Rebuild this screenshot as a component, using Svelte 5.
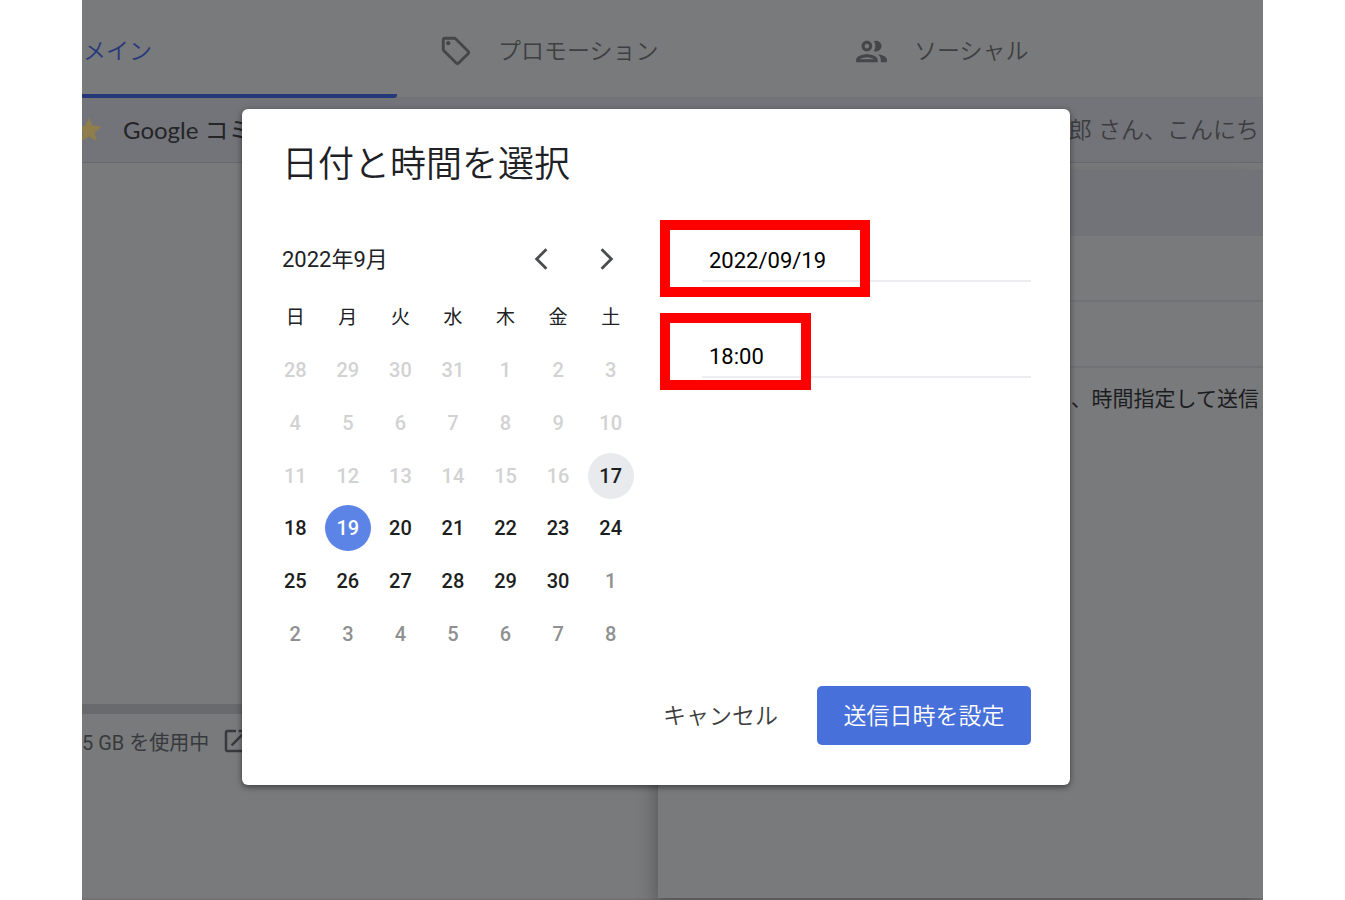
<script lang="ts">
  type Day = { n: number; kind: 'past' | 'open' | 'next' | 'today' | 'selected' };

  const weekdays = ['日', '月', '火', '水', '木', '金', '土'];
  const numbers = [
    28, 29, 30, 31, 1, 2, 3,
    4, 5, 6, 7, 8, 9, 10,
    11, 12, 13, 14, 15, 16, 17,
    18, 19, 20, 21, 22, 23, 24,
    25, 26, 27, 28, 29, 30, 1,
    2, 3, 4, 5, 6, 7, 8,
  ];
  const todayIndex = 20;
  const nextMonthIndex = 34;

  let selected = $state(22);
  let date = $state('2022/09/19');
  let time = $state('18:00');

  function kindOf(i: number): Day['kind'] {
    if (i === selected) return 'selected';
    if (i < todayIndex) return 'past';
    if (i === todayIndex) return 'today';
    return i < nextMonthIndex ? 'open' : 'next';
  }

  let weeks = $derived(
    Array.from({ length: 6 }, (_, w) =>
      numbers.slice(w * 7, w * 7 + 7).map((n, d): Day => ({ n, kind: kindOf(w * 7 + d) }))
    )
  );

  function pick(i: number) {
    selected = i;
    const month = i < nextMonthIndex ? '09' : '10';
    date = `2022/${month}/${String(numbers[i]).padStart(2, '0')}`;
  }
</script>

<div class="screen">
  <div class="mail">
    <nav class="tabs">
      <a class="tab active" href="#main">メイン</a>
      <a class="tab" href="#promotions">
        <svg class="tag" viewBox="0 0 24 24" aria-hidden="true">
          <path d="M21.41 11.58l-9-9C12.05 2.22 11.55 2 11 2H4c-1.1 0-2 .9-2 2v7c0 .55.22 1.05.59 1.42l9 9c.36.36.86.58 1.41.58s1.05-.22 1.41-.59l7-7c.37-.36.59-.86.59-1.41s-.23-1.06-.59-1.42zM13 20.01L4 11V4h7v-.01l9 9-7 7.02z" />
          <circle cx="6.5" cy="6.5" r="1.5" />
        </svg>
        <span>プロモーション</span>
      </a>
      <a class="tab" href="#social">
        <svg class="people" viewBox="0 0 24 24" aria-hidden="true">
          <path d="M9 13.75c-2.34 0-7 1.17-7 3.5V19h14v-1.75c0-2.33-4.66-3.5-7-3.5zM4.34 17c.84-.58 2.87-1.25 4.66-1.25s3.82.67 4.66 1.25H4.34zM9 12c1.93 0 3.5-1.57 3.5-3.5S10.93 5 9 5 5.5 6.57 5.5 8.5 7.07 12 9 12zm0-5c.83 0 1.5.67 1.5 1.5S9.83 10 9 10s-1.5-.67-1.5-1.5S8.17 7 9 7zm7.04 6.81c1.16.84 1.96 1.96 1.96 3.44V19h4v-1.75c0-2.02-3.5-3.17-5.96-3.44zM15 12c1.93 0 3.5-1.57 3.5-3.5S16.93 5 15 5c-.54 0-1.04.13-1.5.35.63.89 1 1.98 1 3.15s-.37 2.26-1 3.15c.46.22.96.35 1.5.35z" />
        </svg>
        <span>ソーシャル</span>
      </a>
    </nav>

    <div class="mail-row">
      <svg class="star" viewBox="0 0 24 24" aria-hidden="true">
        <path d="M12 17.27L18.18 21l-1.64-7.03L22 9.24l-7.19-.61L12 2 9.19 8.63 2 9.24l5.46 4.73L5.82 21z" />
      </svg>
      <span class="sender">Google コミ</span>
      <span class="snippet">郎 さん、こんにち</span>
    </div>

    <div class="below">
      <div class="list">
        <div class="storage-bar"></div>
        <div class="storage">
          <span>5 GB を使用中</span>
          <svg viewBox="0 0 24 24" aria-hidden="true">
            <path d="M19 19H5V5h7V3H5c-1.11 0-2 .9-2 2v14c0 1.1.89 2 2 2h14c1.1 0 2-.9 2-2v-7h-2v7zM14 3v2h3.59l-9.83 9.83 1.41 1.41L19 6.41V10h2V3h-7z" />
          </svg>
        </div>
      </div>
      <div class="compose">
        <div class="compose-head"></div>
        <div class="compose-line"></div>
        <div class="compose-line"></div>
        <div class="compose-body">、時間指定して送信</div>
      </div>
    </div>
  </div>

  <div class="overlay">
    <div class="dialog" role="dialog" aria-modal="true" aria-labelledby="dialog-title">
      <h1 id="dialog-title">日付と時間を選択</h1>
      <div class="content">
        <section class="calendar">
          <div class="month">
            <span>2022年9月</span>
            <button class="arrow" aria-label="前の月">
              <svg viewBox="0 0 24 24"><path d="M17 3L8 12l9 9" /></svg>
            </button>
            <button class="arrow" aria-label="次の月">
              <svg viewBox="0 0 24 24"><path d="M7 3l9 9-9 9" /></svg>
            </button>
          </div>
          <table>
            <thead>
              <tr>
                {#each weekdays as name}
                  <th scope="col">{name}</th>
                {/each}
              </tr>
            </thead>
            <tbody>
              {#each weeks as week, w}
                <tr>
                  {#each week as day, d}
                    <td>
                      <button class="day {day.kind}" disabled={day.kind === 'past'} onclick={() => pick(w * 7 + d)}>{day.n}</button>
                    </td>
                  {/each}
                </tr>
              {/each}
            </tbody>
          </table>
        </section>

        <section class="fields">
          <div class="field">
            <input type="text" aria-label="日付" bind:value={date} />
            <div class="mark date-mark"></div>
          </div>
          <div class="field">
            <input type="text" aria-label="時刻" bind:value={time} />
            <div class="mark time-mark"></div>
          </div>
        </section>
      </div>
      <div class="actions">
        <button class="cancel">キャンセル</button>
        <button class="submit">送信日時を設定</button>
      </div>
    </div>
  </div>
</div>

<style>
  :global(body) { margin: 0; background: #fff; }
  .screen, .screen * { box-sizing: border-box; }
  .screen {
    position: relative;
    height: 100vh;
    margin: 0 82px;
    overflow: hidden;
    font-family: Lato, "Noto Sans CJK JP", sans-serif;
    font-size: 23px;
    font-weight: 400;
    color: #202124;
  }
  button, input { font: inherit; }
  button { padding: 0; border: 0; background: none; cursor: pointer; }

  .mail { display: flex; flex-direction: column; height: 100%; background: #797a7c; border-bottom: 2px solid #737173; white-space: nowrap; }
  .tabs { display: grid; grid-template-columns: 315px 414px 1fr; height: 98px; border-bottom: 1px solid #707174; }
  .tab { display: flex; align-items: center; height: 98px; padding: 4px 0 0 45px; color: #3e3f41; text-decoration: none; font-weight: 350; }
  .tab svg { fill: #454648; }
  .tab span { padding-bottom: 4px; }
  .tab.active { padding: 4px 0 0 1px; color: #26397a; border-bottom: 4px solid #26387a; border-bottom-right-radius: 3px; }
  .tag { width: 34px; height: 34px; margin: 0 25px 0 -3px; }
  .people { width: 37px; height: 37px; margin: 0 24px 0 -3px; }

  .mail-row { display: flex; align-items: center; height: 65px; padding-right: 4px; background: #737479; border-bottom: 1px solid #68696c; }
  .mail-row span { padding-bottom: 4px; }
  .star { flex: none; width: 30px; height: 30px; margin: 0 19px 0 -8px; fill: #8f7d4b; }
  .sender { color: #242528; font-size: 24px; }
  .snippet { margin-left: auto; color: #3c3d40; font-weight: 350; }

  .below { flex: 1; display: grid; grid-template-columns: 576px 1fr; }
  .list { padding-top: 541px; }
  .storage-bar { height: 10px; background: #696a6e; }
  .storage { display: flex; align-items: center; gap: 12px; height: 54px; color: #38393c; font-family: Roboto, "Noto Sans CJK JP", sans-serif; font-size: 20px; }
  .storage svg { width: 30px; height: 30px; fill: #38393c; }
  .compose { margin-top: 7px; background: #797a7c; box-shadow: -4px 8px 18px -2px rgba(0, 0, 0, 0.3); font-size: 21px; }
  .compose-head { height: 66px; background: #727379; }
  .compose-line { height: 66px; border-bottom: 2px solid #717275; }
  .compose-body { padding: 14px 4px 0 0; line-height: 32px; text-align: right; color: #1c1d1f; }

  .overlay { position: absolute; inset: 0; padding: 109px 193px 0 160px; }
  .dialog { padding: 32px 39px 40px 27px; border-radius: 6px; background: #fff; box-shadow: 0 2px 6px rgba(0, 0, 0, 0.5); font-family: Roboto, "Noto Sans CJK JP", sans-serif; }
  h1 { margin: 0 0 46px 13px; font-size: 36px; line-height: 48px; font-weight: 350; }
  .content { display: grid; grid-template-columns: 368px 1fr; gap: 65px; }

  .month { display: flex; align-items: center; height: 48px; margin-bottom: 9px; padding: 0 6px 0 13px; font-size: 22px; }
  .month span { margin-right: auto; padding-bottom: 4px; }
  .arrow { display: grid; place-items: center; width: 48px; height: 48px; }
  .arrow + .arrow { margin-left: 18px; }
  .arrow svg { width: 26px; height: 26px; fill: none; stroke: #4b4c4e; stroke-width: 2.6; }

  table { width: 100%; height: 368px; border-collapse: collapse; table-layout: fixed; font-size: 20px; }
  th, td { height: 52px; padding: 0; text-align: center; vertical-align: middle; line-height: 24px; }
  th { font-size: 19px; font-weight: 400; }
  .day { display: block; width: 46px; height: 46px; margin: 0 auto; border-radius: 50%; color: #1d1e20; font-weight: 500; }
  .past { color: #d2d2d3; cursor: default; }
  .next { color: #8f9091; }
  .today { background: #e8eaed; }
  .selected { background: #5c83e6; color: #fff; }

  .fields { display: flex; flex-direction: column; gap: 52px; padding-top: 3px; }
  .field { position: relative; }
  input { display: block; width: 100%; height: 44px; padding: 2px 0 0 7px; border: 0; border-bottom: 2px solid #ecedf1; border-radius: 0; background: none; outline: none; color: #000; font-size: 22px; }
  .mark { position: absolute; left: -42px; height: 77px; border: 10px solid #f00; pointer-events: none; }
  .date-mark { top: -18px; width: 210px; }
  .time-mark { top: -21px; width: 151px; }

  .actions { display: flex; justify-content: flex-end; gap: 39px; margin-top: 26px; font-weight: 350; }
  .actions button { height: 59px; padding-bottom: 4px; }
  .cancel { color: #3c3d40; }
  .submit { width: 214px; border-radius: 5px; background: #4770da; color: #fff; }
</style>
